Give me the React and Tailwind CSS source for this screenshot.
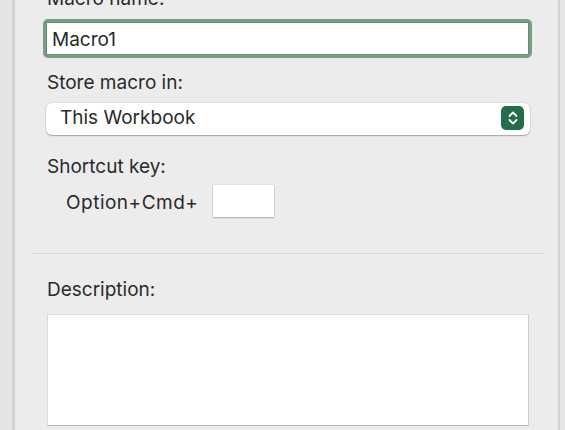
import React from "react";

function Stepper() {
  return (
    <div className="absolute right-[6px] top-[3px] w-[23px] h-[24px] rounded-[5px] bg-[#256c4b] flex items-center justify-center">
      <svg width="12" height="16" viewBox="0 0 12 16" fill="none">
        <path d="M2.5 6 L6 2.5 L9.5 6" stroke="white" strokeWidth="1.8" strokeLinecap="round" strokeLinejoin="round" />
        <path d="M2.5 10 L6 13.5 L9.5 10" stroke="white" strokeWidth="1.8" strokeLinecap="round" strokeLinejoin="round" />
      </svg>
    </div>
  );
}

export default function App() {
  return (
    <div
      className="w-[565px] h-[430px] overflow-hidden flex bg-[#ececec] text-[#2a2a2a]"
      style={{ fontFamily: "Inter, 'Noto Sans', 'Liberation Sans', sans-serif" }}
    >
      <div className="w-[15px] h-full bg-[#e4e4e4] border-r-[3px] border-[#d2d2d2] shrink-0" />
      <div className="w-[543px] h-full shrink-0 flex flex-col text-[19px]">
        <div className="ml-[32px] mt-[-13px] h-[23px] leading-[23px]">Macro name:</div>
        <div className="ml-[28px] mt-[9px] w-[489px] h-[39px] rounded-[5px] border-[3px] border-[#72a084]">
          <div className="h-full bg-white border border-[#6d8a78] pl-[5px] pt-[5px] leading-[23px]">Macro1</div>
        </div>
        <div className="ml-[32px] mt-[13px] h-[23px] leading-[23px]">Store macro in:</div>
        <div className="relative ml-[31px] mt-[9px] w-[484px] h-[32px] rounded-[6px] bg-white shadow-[0_0_0_0.5px_rgba(0,0,0,0.1),0_1px_1.5px_rgba(0,0,0,0.28)] pl-[14px] pt-[3px] leading-[23px]">
          This Workbook
          <Stepper />
        </div>
        <div className="ml-[32px] mt-[20px] h-[23px] leading-[23px]">Shortcut key:</div>
        <div className="ml-[51px] mt-[7px] h-[32px] flex items-center">
          <span className="leading-[23px] pt-[3px] tracking-[0.5px]">Option+Cmd+</span>
          <div className="ml-[15px] w-[61px] h-[32px] bg-white shadow-[0_0_0_0.5px_rgba(0,0,0,0.08),0_1px_1.5px_rgba(0,0,0,0.25)]" />
        </div>
        <div className="ml-[17px] mt-[36px] w-[512px] h-px bg-[#d6d6d6]" />
        <div className="ml-[32px] mt-[24px] h-[23px] leading-[23px]">Description:</div>
        <div className="ml-[32px] mt-[13px] w-[482px] h-[112px] shrink-0 bg-white border border-[#dadada] border-b-[#b9b9b9] border-r-[#cfcfcf]" />
      </div>
      <div className="w-[2px] h-full bg-[#d3d3d3] shrink-0" />
      <div className="flex-1 h-full bg-[#e6e6e6]" />
    </div>
  );
}
